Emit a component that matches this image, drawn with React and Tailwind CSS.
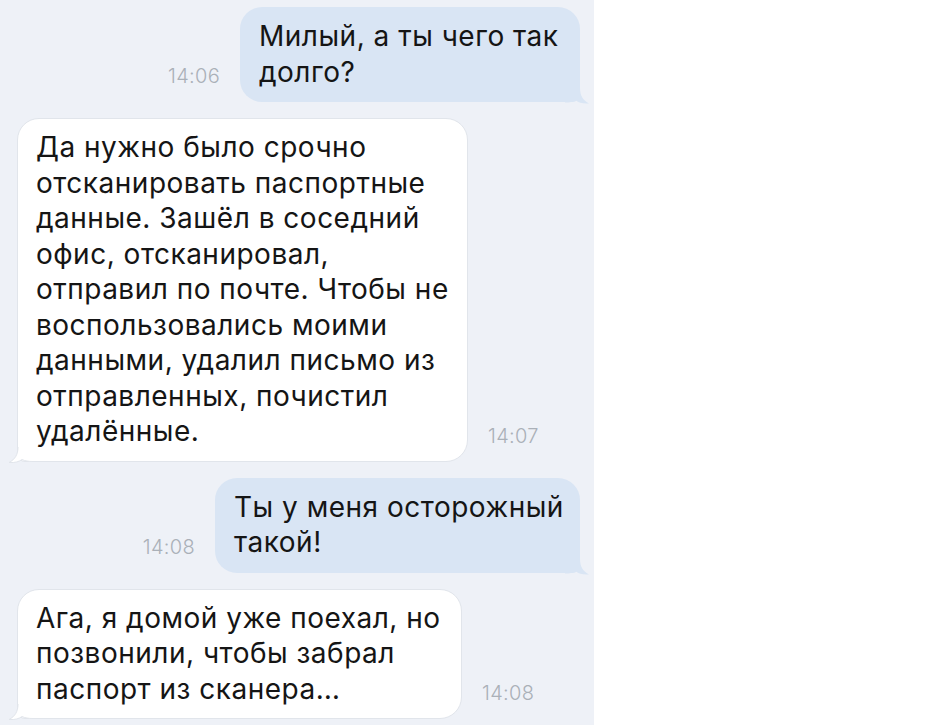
import React from "react";

const FONT = { fontFamily: "Inter, 'Liberation Sans', sans-serif" };

function Tail({ fill, stroke, side }) {
  const cls =
    side === "right"
      ? "absolute -right-[9px] -bottom-[2px]"
      : "absolute -left-[9px] -bottom-[2px] -scale-x-100";
  return (
    <svg className={cls} width="24" height="24" viewBox="0 0 24 24">
      <path
        d="M0 0 H15 V8 C15 15.5 18 20.5 24 23.5 C18 24 13.5 22.5 11 20.5 C8 22 4.5 22.5 0 22.5 Z"
        fill={fill}
      />
      {stroke && (
        <path
          d="M15 8 C15 15.5 18 20.5 24 23.5 C18 24 13.5 22.5 11 20.5 C8 22 4.5 22.5 0 22.5"
          fill="none"
          stroke={stroke}
          strokeWidth="1"
        />
      )}
    </svg>
  );
}

function Time({ children }) {
  return (
    <div className="mb-4 shrink-0 text-[20px] leading-[19px] font-light tracking-[0.3px] text-[#aab0b8]">
      {children}
    </div>
  );
}

function Lines({ lines }) {
  return lines.map((l, i) => (
    <div key={i} className="whitespace-nowrap">
      {l}
    </div>
  ));
}

function Out({ lines, time, width }) {
  return (
    <div className="flex items-end justify-end gap-5 pr-[14px]">
      <Time>{time}</Time>
      <div
        className={`relative rounded-[22px] rounded-br-[8px] bg-[#d9e5f4] px-[19px] py-3 text-[28px] leading-[35.5px] tracking-[0.5px] text-[#151515] ${width}`}
      >
        <Tail fill="#d9e5f4" side="right" />
        <div className="relative">
          <Lines lines={lines} />
        </div>
      </div>
    </div>
  );
}

function In({ lines, time, width }) {
  return (
    <div className="flex items-end gap-5 pl-[17px]">
      <div
        className={`relative rounded-[22px] rounded-bl-[8px] border border-[#e1e5eb] bg-white px-[18px] py-[11px] text-[28px] leading-[35.5px] tracking-[0.5px] text-[#151515] ${width}`}
      >
        <Tail fill="#ffffff" stroke="#e1e5eb" side="left" />
        <div className="relative">
          <Lines lines={lines} />
        </div>
      </div>
      <Time>{time}</Time>
    </div>
  );
}

export default function App() {
  return (
    <div className="flex h-[725px] w-[933px] bg-white" style={FONT}>
      <div className="flex w-[594px] flex-col gap-4 bg-[#eef1f7] pt-[7px]">
        <Out
          width="w-[340px]"
          time="14:06"
          lines={["Милый, а ты чего так", "долго?"]}
        />
        <In
          width="w-[451px]"
          time="14:07"
          lines={[
            "Да нужно было срочно",
            "отсканировать паспортные",
            "данные. Зашёл в соседний",
            "офис, отсканировал,",
            "отправил по почте. Чтобы не",
            "воспользовались моими",
            "данными, удалил письмо из",
            "отправленных, почистил",
            "удалённые.",
          ]}
        />
        <Out
          width="w-[365px]"
          time="14:08"
          lines={["Ты у меня осторожный", "такой!"]}
        />
        <In
          width="w-[445px]"
          time="14:08"
          lines={[
            "Ага, я домой уже поехал, но",
            "позвонили, чтобы забрал",
            "паспорт из сканера…",
          ]}
        />
      </div>
      <div className="flex-1 bg-white" />
    </div>
  );
}
